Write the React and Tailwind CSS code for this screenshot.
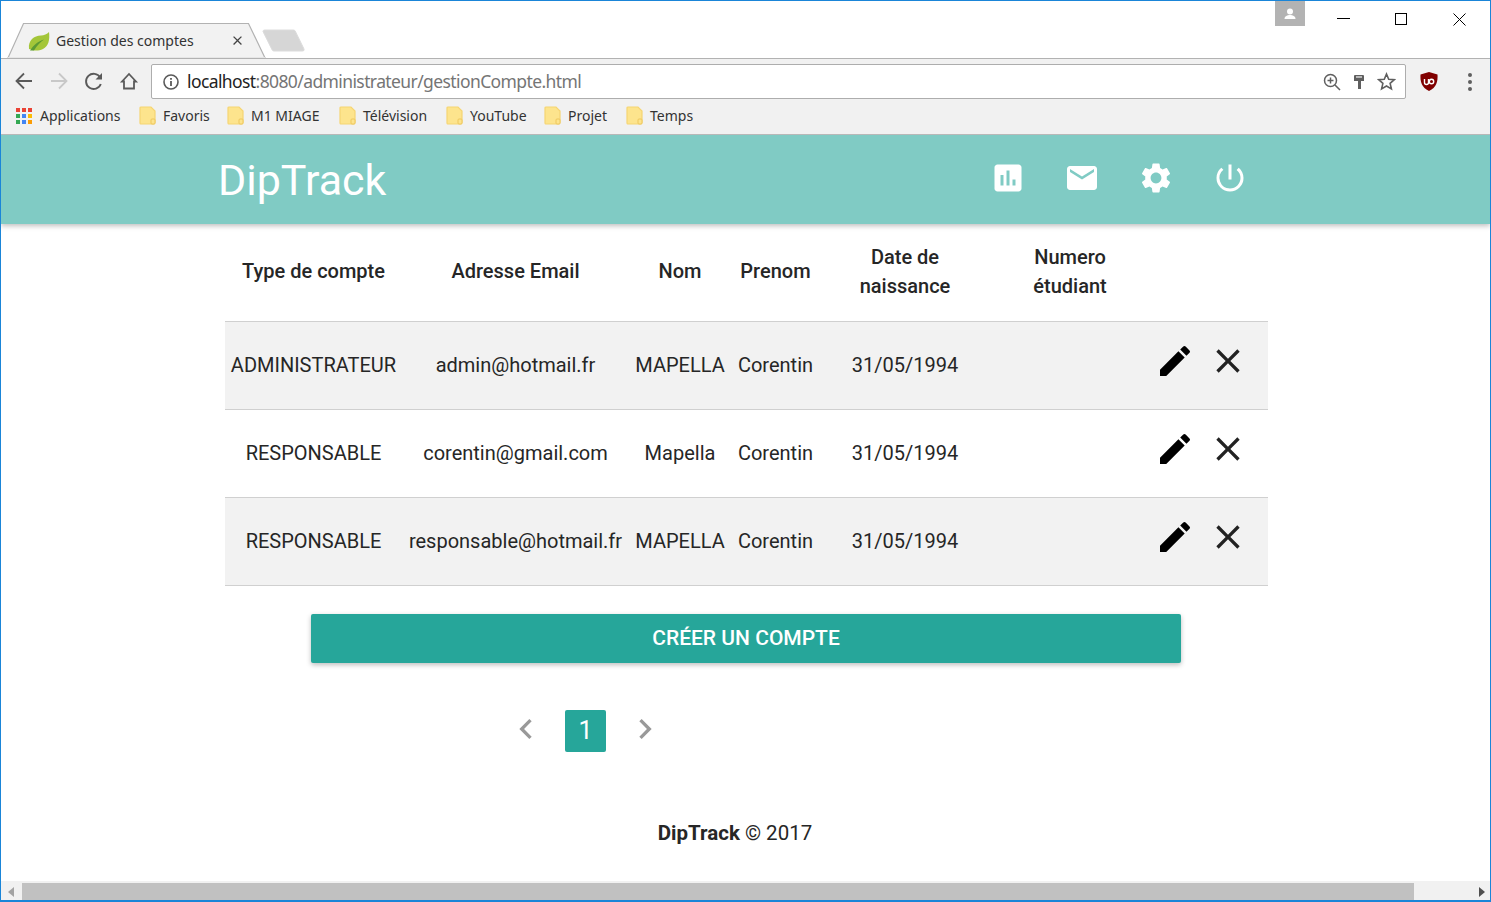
import { MdAssessment, MdEmail, MdSettings, MdPowerSettingsNew, MdEdit, MdClose, MdChevronLeft, MdChevronRight } from 'react-icons/md';

const bookmarks = [
  { name: 'Favoris', width: 'w-[88px]' },
  { name: 'M1 MIAGE', width: 'w-[112px]' },
  { name: 'Télévision', width: 'w-[107px]' },
  { name: 'YouTube', width: 'w-[98px]' },
  { name: 'Projet', width: 'w-[82px]' },
  { name: 'Temps', width: 'w-[80px]' },
];

const accounts = [
  { type: 'ADMINISTRATEUR', email: 'admin@hotmail.fr', nom: 'MAPELLA', shaded: true },
  { type: 'RESPONSABLE', email: 'corentin@gmail.com', nom: 'Mapella', shaded: false },
  { type: 'RESPONSABLE', email: 'responsable@hotmail.fr', nom: 'MAPELLA', shaded: true },
];

const columns = 'grid grid-cols-[177px_227px_102px_89px_170px_160px_118px] items-center text-center pb-[2px]';

function Folder() {
  return (
    <svg width="17" height="19" viewBox="0 0 17 19" className="shrink-0">
      <path d="M2 1h10l4 4v11a2 2 0 0 1-2 2H2a1 1 0 0 1-1-1V2a1 1 0 0 1 1-1z" fill="#fde48d" stroke="#f6d573" strokeWidth="1.2" />
      <rect x="12" y="13" width="4" height="5" rx="1" fill="#fde48d" stroke="#eec75c" />
    </svg>
  );
}

function AppsGrid() {
  const colors = ['#ea4335', '#ea4335', '#ea4335', '#34a853', '#4285f4', '#fbbc05', '#34a853', '#4285f4', '#fb9c05'];
  return (
    <div className="grid grid-cols-3 gap-[2px] w-[16px] shrink-0">
      {colors.map((c, i) => (
        <span key={i} className="w-[4px] h-[4px]" style={{ background: c }} />
      ))}
    </div>
  );
}

function TitleBar() {
  return (
    <div className="relative h-[58px] shrink-0 bg-white border-b border-[#b2b2b2]">
      <svg width="320" height="36" viewBox="0 0 320 36" className="absolute -left-px top-[21px]">
        <path d="M8 35.900 23.500 1.500h225L265 35.900z" fill="#f2f2f2" stroke="#b2b2b2" strokeWidth="1.200" />
        <path d="M8 36h257" stroke="#f2f2f2" strokeWidth="1.500" />
        <path d="M263 9.500a1.500 1.500 0 0 1 1.500-1.500h29a2 2 0 0 1 1.700 1L304 27a1.500 1.500 0 0 1-1.400 2H274a2 2 0 0 1-1.800-1z" fill="#d6d6d6" stroke="#dcdcdc" />
      </svg>
      <svg width="22" height="21" viewBox="0 0 22 21" className="absolute left-[27px] top-[30px]">
        <path d="M1 18C0 9 6 5 13 4.500c3 0 6-1.500 8-3.500 1 8-.5 14-6 17-5 2.500-10 1.500-12 .5z" fill="#a4c639" />
        <path d="M2 19.500c4-6 8-9 14-11-4 3-7 6-10 11z" fill="#5c9a34" />
      </svg>
      <span className="absolute left-[55px] top-[30px] text-[14px] leading-[20px] text-[#333]">Gestion des comptes</span>
      <MdClose size={15} className="absolute left-[229px] top-[32px] text-[#444]" />
      <div className="absolute right-[185px] top-0 w-[30px] h-[25px] bg-[#b3b3b3] flex items-center justify-center">
        <svg width="14" height="12" viewBox="0 0 14 12">
          <circle cx="7" cy="3.500" r="3" fill="#fff" />
          <path d="M1.500 11c0-3 3-4 5.500-4s5.500 1 5.500 4z" fill="#fff" />
        </svg>
      </div>
      <div className="absolute left-[1336px] top-[17px] w-[13px] h-px bg-black" />
      <div className="absolute left-[1394px] top-[12px] w-[12px] h-[12px] border border-black" />
      <svg width="13" height="13" viewBox="0 0 13 13" className="absolute left-[1452px] top-[12px]">
        <path d="M.5.5l12 12M12.500.5l-12 12" stroke="#000" strokeWidth="1" fill="none" />
      </svg>
    </div>
  );
}

function Toolbar() {
  return (
    <div className="h-[40px] shrink-0 bg-[#f1f1f1] flex items-center pl-[11px] pt-[5px]">
      <div className="flex items-center -translate-y-px">
        <svg width="24" height="24" viewBox="0 0 24 24" className="shrink-0 text-[#5a5a5a]">
          <path d="M20 12H5M12 4.500 4.500 12l7.500 7.500" stroke="currentColor" strokeWidth="1.800" fill="none" />
        </svg>
        <svg width="24" height="24" viewBox="0 0 24 24" className="shrink-0 ml-[11px] text-[#c8c8c8]">
          <path d="M4 12h15M12 4.500l7.500 7.500-7.500 7.500" stroke="currentColor" strokeWidth="1.800" fill="none" />
        </svg>
        <svg width="24" height="24" viewBox="0 0 24 24" className="shrink-0 ml-[11px] text-[#5a5a5a]">
          <path d="M18.800 15a7.600 7.600 0 1 1-.6-6.500" stroke="currentColor" strokeWidth="1.900" fill="none" />
          <path d="M20 4v6.500h-6.500z" fill="currentColor" />
        </svg>
        <svg width="24" height="24" viewBox="0 0 24 24" className="shrink-0 ml-[11px] text-[#5a5a5a]">
          <path d="M5 12.500 12 5l7 7.500h-2V19.500H7V12.500z" stroke="currentColor" strokeWidth="1.800" fill="none" />
        </svg>
      </div>
      <div className="ml-[10px] w-[1255px] h-[35px] bg-white border border-[#adadad] rounded-[2px] flex items-center pl-[10px] pr-[9px]">
        <svg width="18" height="18" viewBox="0 0 18 18" className="shrink-0">
          <circle cx="9" cy="9" r="7" stroke="#5a5a5a" strokeWidth="1.600" fill="none" />
          <path d="M9 8v5M9 5v1.800" stroke="#5a5a5a" strokeWidth="1.800" fill="none" />
        </svg>
        <span className="ml-[7px] text-[17.5px] leading-[24px] tracking-[-0.6px] text-[#757575] whitespace-nowrap -translate-y-px">
          <span className="text-[#222]">localhost</span>:8080/administrateur/gestionCompte.html
        </span>
        <div className="ml-auto flex items-center gap-[12px]">
          <svg width="18" height="18" viewBox="0 0 18 18">
            <circle cx="7.500" cy="7.500" r="6" stroke="#5f5f5f" strokeWidth="1.500" fill="none" />
            <path d="M12 12l5 5M4.500 7.500h6M7.500 4.500v6" stroke="#5f5f5f" strokeWidth="1.500" fill="none" />
          </svg>
          <svg width="12" height="18" viewBox="0 0 12 18">
            <path d="M1 3a1 1 0 0 1 1-1h8a1 1 0 0 1 1 1v5H8v8H5V8H1z" fill="#5f5f5f" />
            <path d="M3 4h6" stroke="#f5f5f5" strokeWidth="1.200" />
          </svg>
          <svg width="19" height="19" viewBox="0 0 19 19">
            <path d="M9.500 2l2.200 5.200 5.600.5-4.200 3.700 1.300 5.500-4.900-2.900-4.900 2.900 1.300-5.500L1.700 7.700l5.600-.5z" stroke="#5f5f5f" strokeWidth="1.600" fill="none" />
          </svg>
        </div>
      </div>
      <svg width="20" height="21" viewBox="0 0 20 21" className="shrink-0 ml-[13px]">
        <path d="M10 1l8.500 2.500c.5 7-1 13-8.500 16.500C2.500 16.500 1 10.500 1.500 3.500z" fill="#800000" />
        <path d="M5.500 8v3.500a2 2 0 0 0 4 0V8" stroke="#fff" strokeWidth="1.400" fill="none" />
        <circle cx="12.500" cy="10.500" r="2.200" stroke="#fff" strokeWidth="1.400" fill="none" />
      </svg>
      <div className="ml-[29px] flex flex-col gap-[3px]">
        <span className="w-[4px] h-[4px] rounded-full bg-[#5f5f5f]" />
        <span className="w-[4px] h-[4px] rounded-full bg-[#5f5f5f]" />
        <span className="w-[4px] h-[4px] rounded-full bg-[#5f5f5f]" />
      </div>
    </div>
  );
}

function BookmarkBar() {
  return (
    <div className="h-[36px] shrink-0 bg-[#f1f1f1] border-b border-[#b8b8b8] flex items-center pl-[15px] pb-[2px] text-[14px] text-[#333]">
      <div className="w-[123px] flex items-center gap-[8px]">
        <AppsGrid />
        <span>Applications</span>
      </div>
      {bookmarks.map((b) => (
        <div key={b.name} className={`${b.width} flex items-center gap-[7px]`}>
          <Folder />
          <span className="whitespace-nowrap">{b.name}</span>
        </div>
      ))}
    </div>
  );
}

function Page() {
  return (
    <div className="flex-1 min-h-0 overflow-hidden bg-white text-[20px] text-[#262626] font-['Roboto',sans-serif]">
      <header className="h-[89px] bg-[#80cbc4] shadow-[0_2px_5px_rgba(0,0,0,0.25)] flex items-center pl-[217px] pr-[242px]">
        <span className="text-[43px] leading-none text-white translate-y-px">DipTrack</span>
        <nav className="ml-auto flex items-center gap-[38px] text-white -translate-y-[2px]">
          <MdAssessment size={36} />
          <MdEmail size={36} />
          <MdSettings size={36} />
          <MdPowerSettingsNew size={36} />
        </nav>
      </header>

      <div className="ml-[224px] w-[1043px]">
        <div className={`${columns} h-[98px] border-b border-[#d0d0d0] font-medium leading-[29px]`}>
          <span>Type de compte</span>
          <span>Adresse Email</span>
          <span>Nom</span>
          <span>Prenom</span>
          <span>Date de<br />naissance</span>
          <span>Numero<br />étudiant</span>
          <span />
        </div>
        {accounts.map((a) => (
          <div key={a.email} className={`${columns} h-[88px] border-b border-[#d0d0d0] ${a.shaded ? 'bg-[#f2f2f2]' : 'bg-white'}`}>
            <span>{a.type}</span>
            <span>{a.email}</span>
            <span>{a.nom}</span>
            <span>Corentin</span>
            <span>31/05/1994</span>
            <span />
            <span className="flex items-center gap-[13px] pl-[5px] -translate-y-[4px]">
              <MdEdit size={40} className="text-black" />
              <MdClose size={40} className="text-[#222]" />
            </span>
          </div>
        ))}
      </div>

      <button className="block ml-[310px] mt-[28px] w-[870px] h-[49px] rounded-[2px] bg-[#26a69a] text-white text-[21px] font-medium uppercase shadow-[0_2px_5px_rgba(0,0,0,0.26)]">
        Créer un compte
      </button>

      <div className="ml-[505px] mt-[47px] flex items-center text-[#999]">
        <MdChevronLeft size={40} className="-translate-y-[2px]" />
        <span className="ml-[19px] w-[41px] h-[42px] rounded-[2px] bg-[#26a69a] text-white text-[25px] flex items-center justify-center">1</span>
        <MdChevronRight size={40} className="ml-[19px] -translate-y-[2px]" />
      </div>

      <footer className="mt-[67px] ml-[-21px] text-center text-[20.5px] leading-[29px]">
        <b className="font-bold">DipTrack</b> © 2017
      </footer>
    </div>
  );
}

function Scrollbar() {
  return (
    <div className="h-[19px] shrink-0 bg-[#f1f1f1] flex items-center pt-[2px]">
      <span className="ml-[7px] w-0 h-0 border-y-[5px] border-y-transparent border-r-[6px] border-r-[#a3a3a3]" />
      <div className="ml-[8px] w-[1392px] h-full bg-[#c1c1c1]" />
      <span className="ml-auto mr-[5px] w-0 h-0 border-y-[5px] border-y-transparent border-l-[6px] border-l-[#505050]" />
    </div>
  );
}

export default function App() {
  return (
    <div className="w-[1491px] h-[902px] overflow-hidden border border-[#1a85d8] border-b-2 flex flex-col font-['Noto_Sans',sans-serif]">
      <TitleBar />
      <Toolbar />
      <BookmarkBar />
      <Page />
      <Scrollbar />
    </div>
  );
}
